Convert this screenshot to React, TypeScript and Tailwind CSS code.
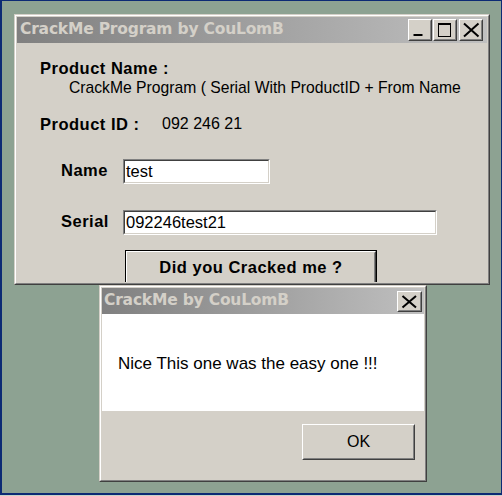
import React from 'react';

type Kids = { children?: React.ReactNode };

// classic raised window frame: light outer / white inner on top-left, dark on bottom-right
function Frame({ className, children }: Kids & { className: string }) {
    return (
        <div className={`${className} border border-t-[#d4d0c8] border-l-[#d4d0c8] border-r-[#404040] border-b-[#404040]`}>
            <div className="h-full flex flex-col p-px bg-[#d4d0c8] border border-t-white border-l-white border-r-[#808080] border-b-[#808080]">
                {children}
            </div>
        </div>
    );
}

function TitleBar({ title, pad, children }: Kids & { title: string; pad: string }) {
    return (
        <div className="h-[26px] shrink-0 flex items-center bg-linear-to-r from-[#808080] to-[#c0c0c0]">
            <span className={`${pad} font-['DejaVu_Sans',Verdana,sans-serif] font-bold text-[15.5px] tracking-[-0.2px] leading-none text-[#d4d0c8] whitespace-nowrap`}>
                {title}
            </span>
            <div className="ml-auto flex items-center">{children}</div>
        </div>
    );
}

function CaptionButton({ className, children }: Kids & { className: string }) {
    return (
        <div className={`${className} border border-t-white border-l-white border-r-[#404040] border-b-[#404040]`}>
            <div className="h-full bg-[#d4d0c8] border border-t-[#d4d0c8] border-l-[#d4d0c8] border-r-[#808080] border-b-[#808080]">
                {children}
            </div>
        </div>
    );
}

function CloseGlyph({ w, h, x1, y1, x2, y2 }: { w: number; h: number; x1: number; y1: number; x2: number; y2: number }) {
    return (
        <svg width={w} height={h} viewBox={`0 0 ${w} ${h}`} className="block">
            <path d={`M${x1} ${y1} L${x2} ${y2} M${x2} ${y1} L${x1} ${y2}`} stroke="#000" strokeWidth="2" fill="none" />
        </svg>
    );
}

function Field({ className, value }: { className: string; value: string }) {
    return (
        <div className={`${className} h-[25px] border border-t-[#808080] border-l-[#808080] border-r-white border-b-white`}>
            <div className="h-full flex items-center pl-px bg-white text-[16.5px] leading-none border border-t-[#404040] border-l-[#404040] border-r-[#d4d0c8] border-b-[#d4d0c8]">
                {value}
            </div>
        </div>
    );
}

export default function App() {
    return (
        <div className="w-[502px] h-[496px] bg-[#c9d5cb] font-['Liberation_Sans',Arial,sans-serif] text-black">
            <div className="relative w-[502px] h-[495px] overflow-hidden bg-[#8da292] border-l-2 border-t border-r border-b-2 border-[#0c2a74]">
                {/* Main window */}
                <Frame className="absolute left-[12px] top-[13px] w-[476px] h-[271px]">
                    <TitleBar title="CrackMe Program by CouLomB" pad="pl-[3px]">
                        <CaptionButton className="w-[24px] h-[22px]">
                            <svg width="20" height="18" viewBox="0 0 20 18" className="block">
                                <rect x="3.5" y="13" width="9" height="2" fill="#000" />
                            </svg>
                        </CaptionButton>
                        <CaptionButton className="w-[24px] h-[22px] ml-px">
                            <svg width="20" height="18" viewBox="0 0 20 18" className="block">
                                <rect x="3.5" y="2.5" width="12" height="13" stroke="#000" strokeWidth="1" fill="none" />
                                <rect x="3" y="2" width="13" height="2" fill="#000" />
                            </svg>
                        </CaptionButton>
                        <CaptionButton className="w-[24px] h-[22px] ml-[2px] mr-[4px]">
                            <CloseGlyph w={20} h={18} x1={3} y1={2.5} x2={17.5} y2={15.5} />
                        </CaptionButton>
                    </TitleBar>

                    <div className="flex-1 overflow-hidden pl-[23px] pt-[16px]">
                        <div className="text-[16.5px] leading-[18px] font-bold tracking-[0.5px]">Product Name :</div>
                        <div className="mt-[2px] pl-[29px] text-[15.7px] leading-[18px] whitespace-nowrap">
                            CrackMe Program ( Serial With ProductID + From Name
                        </div>
                        <div className="mt-[18px] flex leading-[18px]">
                            <span className="w-[122px] text-[16.5px] font-bold tracking-[0.5px]">Product ID :</span>
                            <span className="text-[16px]">092 246 21</span>
                        </div>

                        <div className="mt-[26px] pl-[21px] flex items-start">
                            <span className="w-[62px] mt-[2px] text-[16.5px] leading-[18px] font-bold tracking-[0.5px]">Name</span>
                            <Field className="w-[147px]" value="test" />
                        </div>
                        <div className="mt-[26px] pl-[21px] flex items-start">
                            <span className="w-[62px] mt-[2px] text-[16.5px] leading-[18px] font-bold tracking-[0.5px]">Serial</span>
                            <Field className="w-[314px]" value="092246test21" />
                        </div>

                        {/* default button, cut off by the window's bottom edge */}
                        <div className="mt-[15px] ml-[85px] w-[252px] h-[37px] border border-black">
                            <div className="h-full border border-t-white border-l-white border-r-[#404040] border-b-[#404040]">
                                <div className="h-full flex justify-center pt-[5px] border border-transparent border-r-[#808080] border-b-[#808080] text-[16.5px] leading-[18px] font-bold tracking-[0.5px]">
                                    Did you Cracked me ?
                                </div>
                            </div>
                        </div>
                    </div>
                </Frame>

                {/* Message box */}
                <Frame className="absolute left-[97px] top-[284px] w-[328px] h-[197px]">
                    <TitleBar title="CrackMe by CouLomB" pad="pl-[2px]">
                        <CaptionButton className="w-[25px] h-[21px] mr-[2px]">
                            <CloseGlyph w={21} h={17} x1={3.5} y1={3} x2={17} y2={14.5} />
                        </CaptionButton>
                    </TitleBar>
                    <div className="h-[97px] shrink-0 bg-white pl-[16px] pt-[40px] text-[17px] leading-[20px] whitespace-nowrap">
                        Nice This one was the easy one !!!
                    </div>
                    <div className="flex-1 flex justify-end items-start pt-[13px] pr-[9px]">
                        <div className="w-[113px] h-[36px] border border-t-white border-l-white border-r-[#404040] border-b-[#404040]">
                            <div className="h-full flex items-center justify-center border border-transparent border-r-[#808080] border-b-[#808080] text-[16px] leading-none">
                                OK
                            </div>
                        </div>
                    </div>
                </Frame>
            </div>
        </div>
    );
}
